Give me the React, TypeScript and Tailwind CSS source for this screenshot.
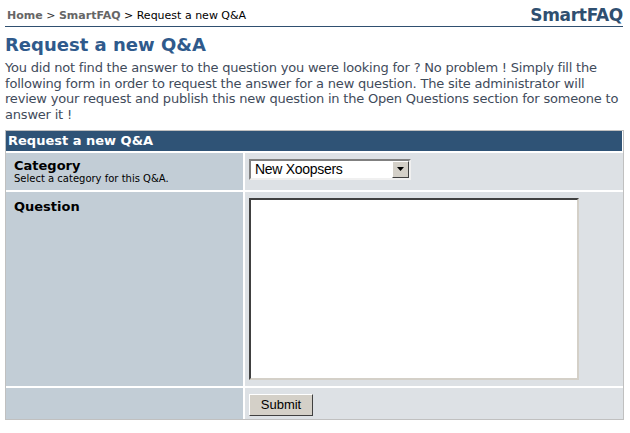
export default function App() {
  return (
    <div className="w-[630px] h-[433px] bg-white px-[5px] pt-[6px] font-['DejaVu_Sans',Verdana,sans-serif]">
      {/* breadcrumb + logo */}
      <div className="flex items-end justify-between border-b border-[#2f4f70] pb-[2px] mr-[2px]">
        <div className="text-[11px] leading-[14px] pl-[2px] pb-[1px]">
          <span className="font-bold text-[#666666]">Home</span>
          <span className="text-[#333333]"> &gt; </span>
          <span className="font-bold text-[#666666]">SmartFAQ</span>
          <span className="text-black"> &gt; Request a new Q&amp;A</span>
        </div>
        <div className="text-[17px] leading-[18px] font-bold text-[#2f4f70] tracking-[-0.3px]">SmartFAQ</div>
      </div>

      <h1 className="mt-[7px] text-[18px] leading-[22px] font-bold text-[#2f5a8c]">Request a new Q&amp;A</h1>

      <p className="mt-[4px] text-[13px] leading-[15.7px] text-[#3f4b5b] tracking-[-0.2px] whitespace-nowrap">
        You did not find the answer to the question you were looking for ? No problem ! Simply fill the<br />
        following form in order to request the answer for a new question. The site administrator will<br />
        review your request and publish this new question in the Open Questions section for someone to<br />
        answer it !
      </p>

      {/* form table */}
      <div className="mt-[7px] mr-[1px] border border-[#c0c0c0] bg-white flex flex-col gap-[2px]">
        <div className="h-[20px] bg-[#2f5376] text-white font-bold text-[13px] leading-[20px] px-[2px] mr-[1px]">
          Request a new Q&amp;A
        </div>
        <div className="flex gap-[2px] h-[37px]">
          <div className="w-[237px] bg-[#c2cdd6] px-[8px] pt-[6px]">
            <div className="text-[13px] leading-[14px] font-bold text-black">Category</div>
            <div className="text-[10px] leading-[12px] text-black">Select a category for this Q&amp;A.</div>
          </div>
          <div className="flex-1 bg-[#dde1e5] pl-[4px] pt-[6px]">
            <div className="w-[162px] h-[21px] bg-white border-2 border-t-[#808080] border-l-[#808080] border-b-[#f0f0f0] border-r-[#f0f0f0] flex items-center justify-between font-['Liberation_Sans',Arial,sans-serif] text-[14px] text-black">
              <span className="pl-[4px] tracking-[-0.3px]">New Xoopsers</span>
              <span className="w-[17px] h-[17px] bg-[#d4d0c8] border border-t-white border-l-white border-b-[#404040] border-r-[#404040] flex items-center justify-center">
                <svg width="7" height="4" viewBox="0 0 7 4"><path d="M0 0h7L3.5 4z" fill="#000" /></svg>
              </span>
            </div>
          </div>
        </div>
        <div className="flex gap-[2px] h-[194px]">
          <div className="w-[237px] bg-[#c2cdd6] px-[8px] pt-[8px]">
            <div className="text-[13px] leading-[14px] font-bold text-black">Question</div>
          </div>
          <div className="flex-1 bg-[#dde1e5] pl-[4px] pt-[6px]">
            <div className="w-[330px] h-[182px] bg-white border-2 border-t-[#404040] border-l-[#404040] border-b-[#d4d0c8] border-r-[#d4d0c8]" />
          </div>
        </div>
        <div className="flex gap-[2px] h-[31px]">
          <div className="w-[237px] bg-[#c2cdd6]" />
          <div className="flex-1 bg-[#dde1e5] pl-[4px] pt-[4px]">
            <button className="w-[64px] h-[22px] bg-[#d4d0c8] border border-t-white border-l-white border-b-[#404040] border-r-[#404040] font-['Liberation_Sans',Arial,sans-serif] text-[13px] leading-[18px] text-black">
              Submit
            </button>
          </div>
        </div>
      </div>
    </div>
  );
}
